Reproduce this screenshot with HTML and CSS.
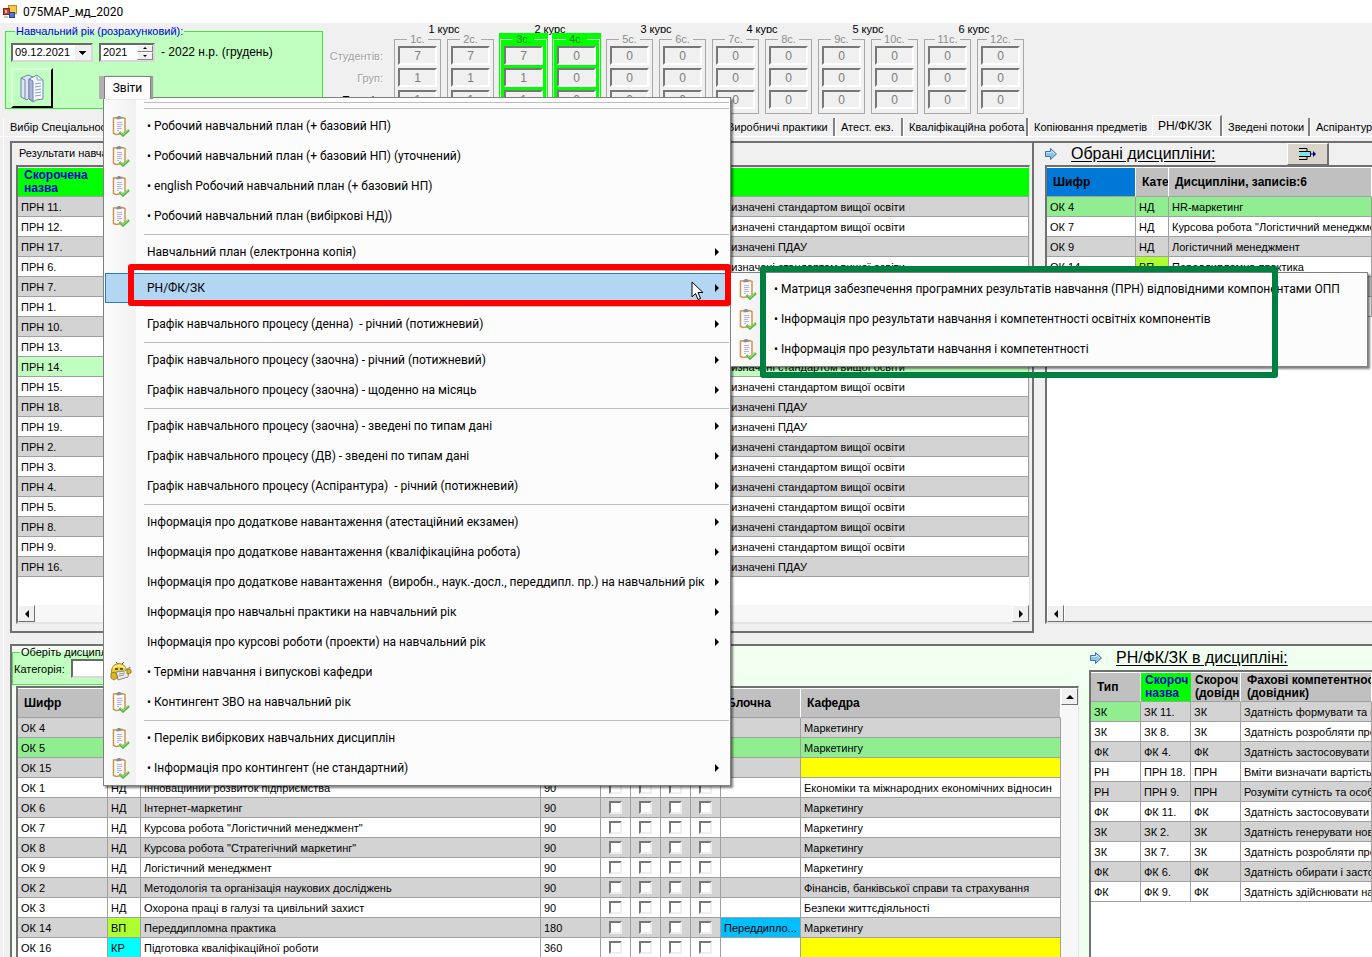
FILE: index.html
```html
<!DOCTYPE html>
<html lang="uk">
<head>
    <meta charset="UTF-8">
    <meta name="viewport" content="width=device-width, initial-scale=1.0">
    <title>075МАР_мд_2020</title>
    <link rel="stylesheet" href="styles.css">
</head>
<body>
    <svg class="sprite" aria-hidden="true">
        <symbol id="clip" viewBox="0 0 18 22">
            <path d="M1.500 3l9-.5 2.500 1v14.500l-9 1.500-2.500-1z" fill="#fff" stroke="#c9964c" stroke-width="1.500"/>
            <path d="M4 5.500l7.500-.5v11.500l-7.500 1z" fill="#f6f6fd"/>
            <path d="M4.500 2.500l1.500-1.500h2l1.500 1.500v1.500l-5 .5z" fill="#8c8c94"/>
            <path d="M5 7.500h5M5 9.500h5.500M5 11.500h4M5 13.500h5M5 15.500h2" stroke="#b3acd2" stroke-width=".9"/>
            <path d="M7.500 17l3.500 3.500 6-5.500" fill="none" stroke="#58b547" stroke-width="2.400"/>
            <path d="M8.500 17.500l2.500 2 5.500-5" fill="none" stroke="#a4e58a" stroke-width="1"/>
        </symbol>
        <symbol id="face" viewBox="0 0 22 22">
            <path d="M8 3l-2-2M12 3l2-2" stroke="#555" stroke-width="1"/>
            <circle cx="9" cy="10" r="7.500" fill="#f2cf2e" stroke="#a8871a"/>
            <path d="M3 7q6-5 12 0" fill="none" stroke="#fff3a0" stroke-width="1.500"/>
            <path d="M5 8h3M10 8h3" stroke="#333" stroke-width="1.500"/>
            <path d="M6 11l9-1 5-4-2 10-10 3z" fill="#e9e9e9" stroke="#8a8a8a"/>
            <path d="M9 13l6-1M9 15l5-1" stroke="#999"/>
            <path d="M1 12l4-1 3 5-4 3-3-2zM17 8l4 1v3l-4 1z" fill="#dfb424" stroke="#8d6f14" stroke-width=".8"/>
        </symbol>
        <symbol id="go" viewBox="0 0 12 12">
            <path d="M.5 3.500h5v-3L11.500 6l-6 5.500v-3h-5z" fill="#8cc4ea" stroke="#40749e"/>
            <path d="M1.500 4.500h5V3L10 6" fill="none" stroke="#d3ecfb"/>
        </symbol>
    </svg>

    <header class="titlebar">
        <svg class="app-icon" width="14" height="14" viewBox="0 0 14 14" aria-hidden="true">
            <rect x="5.500" y=".5" width="8" height="8" fill="#f6c748" stroke="#b98d1d"/>
            <rect x=".5" y="3.500" width="6" height="6" fill="#c8402e" stroke="#8b2a1c"/>
            <rect x="2" y="5" width="2" height="3" fill="#f3b8a8"/>
            <rect x="6.500" y="7.500" width="5" height="5" fill="#4a7bd0" stroke="#26478e"/>
            <path d="M1 12h4" stroke="#999"/>
        </svg>
        075МАР_мд_2020
    </header>

    <section class="top">
        <fieldset class="year">
            <legend>Навчальний рік (розрахунковий):</legend>
            <div class="year-row">
                <select class="date" aria-label="Дата"><option>09.12.2021</option></select>
                <span class="spin">
                    <input type="text" value="2021" aria-label="Рік">
                    <span class="spin-btns"><button class="up" aria-label="Більше"></button><button class="down" aria-label="Менше"></button></span>
                </span>
                <span>- 2022 н.р. (грудень)</span>
            </div>
            <button class="docs" aria-label="Документи">
                <svg width="26" height="30" viewBox="0 0 26 30">
                    <path d="M2 5l7-3 5 2v20l-4 1-2 2-6-3z" fill="#dfe5f5" stroke="#7182ab"/>
                    <path d="M2 5l4 2v19" fill="none" stroke="#7182ab"/>
                    <path d="M10 6l8-4 6 5v19l-7 1-3 2-4-3z" fill="#f7f9ff" stroke="#7182ab"/>
                    <path d="M10 6l4 2v20l-4-2z" fill="#a9b6d9" stroke="#7182ab"/>
                    <path d="M18 2v5h6M16 11l6-1M16 14l6-1M16 17l6-1M16 20l6-1M16 23l6-1" fill="none" stroke="#8d9cc4"/>
                </svg>
            </button>
        </fieldset>
        <div class="counts">
            <div class="count-labels">
                <span class="off">Студентів:</span>
                <span class="off">Груп:</span>
                <span>Потоків:</span>
            </div>
            <div class="courses" id="courses"></div>
        </div>
    </section>

    <nav class="tabs">
        <button class="tab tab-first">Вибір Спеціальностей</button>
        <button class="tab tab-114">Виробничі практики</button>
        <button class="tab tab-68">Атест. екз.</button>
        <button class="tab tab-126">Кваліфікаційна робота</button>
        <button class="tab tab-124">Копіювання предметів</button>
        <button class="tab tab-on">РН/ФК/ЗК</button>
        <button class="tab tab-88">Зведені потоки</button>
        <button class="tab">Аспірантура</button>
    </nav>

    <main class="page">
        <section class="upper">
            <div class="results">
                <div class="caption">Результати навчання</div>
                <div class="grid">
                    <table>
                        <colgroup><col class="w-90"><col><col class="w-308"></colgroup>
                        <thead><tr><th class="lime">Скорочена назва</th><th class="lime"></th><th class="lime"></th></tr></thead>
                        <tbody id="results"></tbody>
                    </table>
                    <div class="hscroll"><button class="left" aria-label="Ліворуч"></button><i></i><button class="right" aria-label="Праворуч"></button></div>
                </div>
            </div>
            <div class="chosen">
                <div class="heading">
                    <svg width="12" height="12"><use href="#go"/></svg>
                    <h2>Обрані дисципліни:</h2>
                    <button class="insert" aria-label="Додати">
                        <svg width="20" height="14" viewBox="0 0 20 14">
                            <path d="M1 1.500h8v3M1 12.500h8v-3" fill="none" stroke="#000"/>
                            <rect x="1.500" y="4.500" width="11" height="5" fill="#7fe9e9"/>
                            <path d="M1 4.500h11.500v5H1" fill="none" stroke="#000"/>
                            <path d="M12 7h5" stroke="#000080"/><path d="M15 4l3 3-3 3z" fill="#000080"/>
                        </svg>
                    </button>
                </div>
                <div class="grid">
                    <table>
                        <colgroup><col class="w-89"><col class="w-33"><col></colgroup>
                        <thead><tr><th class="blue">Шифр</th><th class="nowrap">Категорія</th><th class="nowrap">Дисципліни, записів:6</th></tr></thead>
                        <tbody>
                            <tr class="sel"><td>ОК 4</td><td>НД</td><td>HR-маркетинг</td></tr>
                            <tr><td>ОК 7</td><td>НД</td><td>Курсова робота "Логістичний менеджмент"</td></tr>
                            <tr class="odd"><td>ОК 9</td><td>НД</td><td>Логістичний менеджмент</td></tr>
                            <tr><td>ОК 14</td><td class="vp">ВП</td><td>Переддипломна практика</td></tr>
                            <tr class="odd"><td></td><td></td><td></td></tr>
                            <tr><td></td><td></td><td></td></tr>
                        </tbody>
                    </table>
                    <div class="hscroll"><button class="left" aria-label="Ліворуч"></button><i class="thumb"></i></div>
                </div>
            </div>
        </section>

        <section class="lower">
            <div class="subjects">
                <fieldset class="filter">
                    <legend>Оберіть дисципліну</legend>
                    <label for="cat">Категорія:</label>
                    <input type="text" id="cat">
                </fieldset>
                <div class="grid with-vscroll">
                    <table>
                        <colgroup><col class="w-90"><col class="w-33"><col><col class="w-60"><col class="w-30"><col class="w-30"><col class="w-30"><col class="w-30"><col class="w-80"><col class="w-260"></colgroup>
                        <thead><tr><th>Шифр</th><th></th><th></th><th></th><th></th><th></th><th></th><th></th><th class="nowrap">Блочна</th><th>Кафедра</th></tr></thead>
                        <tbody id="subjects"></tbody>
                    </table>
                    <div class="vscroll"><button class="up" aria-label="Вгору"></button></div>
                </div>
            </div>
            <div class="links">
                <div class="heading">
                    <svg width="12" height="12"><use href="#go"/></svg>
                    <h2>РН/ФК/ЗК в дисципліні:</h2>
                </div>
                <div class="grid">
                    <table>
                        <colgroup><col class="w-50"><col class="w-50"><col class="w-50"><col></colgroup>
                        <thead><tr><th>Тип</th><th class="lime tight">Скороч назва</th><th class="tight">Скороч (довідн</th><th class="nowrap">Фахові компетентності<br>(довідник)</th></tr></thead>
                        <tbody id="links"></tbody>
                    </table>
                </div>
            </div>
        </section>
    </main>

    <button class="menu-tab">Звіти</button>
    <div class="menu" id="menu"></div>
    <div class="menu submenu" id="submenu"></div>
    <div class="mark mark-red"></div>
    <div class="mark mark-green"></div>
    <svg class="cursor" width="13" height="20" viewBox="0 0 13 20" aria-hidden="true">
        <path d="M1 1v15l3.500-3.500 2.500 6 2.500-1-2.500-6h5z" fill="#fff" stroke="#000"/>
    </svg>

    <script>
        function byId(id) { return document.getElementById(id); }

        // semester counters, two per course
        var students = [7, 7, 7, 0, 0, 0, 0, 0, 0, 0, 0, 0];
        var groups = [1, 1, 1, 0, 0, 0, 0, 0, 0, 0, 0, 0];
        function semester(n) {
            var now = n == 3 || n == 4 ? ' now' : '';
            return '<div class="sem-wrap' + now + '"><fieldset class="sem" disabled><legend>' + n + 'с.</legend>' +
                [students[n - 1], groups[n - 1], groups[n - 1]].map(function (v) {
                    return '<input type="text" aria-label="' + n + ' семестр" value="' + v + '">';
                }).join('') + '</fieldset></div>';
        }
        byId('courses').innerHTML = [1, 2, 3, 4, 5, 6].map(function (c) {
            return '<div class="course"><div class="course-name">' + c + ' курс</div><div class="sems">' +
                semester(c * 2 - 1) + semester(c * 2) + '</div></div>';
        }).join('');

        // program results
        var own = [17, 18, 19, 16];
        byId('results').innerHTML = [11, 12, 17, 6, 7, 1, 10, 13, 14, 15, 18, 19, 2, 3, 4, 5, 8, 9, 16].map(function (n, i) {
            var cls = n == 14 ? 'pale' : i % 2 ? '' : 'odd';
            return '<tr class="' + cls + '"><td>ПРН ' + n + '.</td><td></td><td>Визначені ' +
                (own.indexOf(n) >= 0 ? 'ПДАУ' : 'стандартом вищої освіти') + '</td></tr>';
        }).join('');

        // subjects: code, category, name, hours, department
        var subjects = [
            ['ОК 4', 'НД', '', 90, 'Маркетингу'],
            ['ОК 5', 'НД', '', 90, 'Маркетингу'],
            ['ОК 15', 'НД', '', 90, ''],
            ['ОК 1', 'НД', 'Інноваційний розвиток підприємства', 90, 'Економіки та міжнародних економічних відносин'],
            ['ОК 6', 'НД', 'Інтернет-маркетинг', 90, 'Маркетингу'],
            ['ОК 7', 'НД', 'Курсова робота "Логістичний менеджмент"', 90, 'Маркетингу'],
            ['ОК 8', 'НД', 'Курсова робота "Стратегічний маркетинг"', 90, 'Маркетингу'],
            ['ОК 9', 'НД', 'Логістичний менеджмент', 90, 'Маркетингу'],
            ['ОК 2', 'НД', 'Методологія та організація наукових досліджень', 90, 'Фінансів, банківської справи та страхування'],
            ['ОК 3', 'НД', 'Охорона праці в галузі та цивільний захист', 90, 'Безпеки життєдіяльності'],
            ['ОК 14', 'ВП', 'Переддипломна практика', 180, 'Маркетингу'],
            ['ОК 16', 'КР', 'Підготовка кваліфікаційної роботи', 360, '']
        ];
        byId('subjects').innerHTML = subjects.map(function (s, i) {
            var row = i == 1 ? 'sel' : i % 2 ? '' : 'odd';
            var cat = s[1] == 'ВП' ? 'vp' : s[1] == 'КР' ? 'kr' : '';
            var box = '<td class="check"><input type="checkbox" aria-label="' + s[0] + '"></td>';
            return '<tr class="' + row + '"><td>' + s[0] + '</td><td class="' + cat + '">' + s[1] + '</td><td>' + s[2] +
                '</td><td>' + s[3] + '</td>' + box + box + box + box +
                (s[1] == 'ВП' ? '<td class="sky">Переддипло...</td>' : '<td></td>') +
                '<td class="' + (s[4] ? '' : 'empty') + '">' + s[4] + '</td></tr>';
        }).join('');

        var links = [
            ['ЗК', 'ЗК 11.', 'ЗК', 'Здатність формувати та підтримувати'],
            ['ЗК', 'ЗК 8.', 'ЗК', 'Здатність розробляти проекти'],
            ['ФК', 'ФК 4.', 'ФК', 'Здатність застосовувати методи'],
            ['РН', 'ПРН 18.', 'ПРН', 'Вміти визначати вартість товару'],
            ['РН', 'ПРН 9.', 'ПРН', 'Розуміти сутність та особливості'],
            ['ФК', 'ФК 11.', 'ФК', 'Здатність застосовувати методи'],
            ['ЗК', 'ЗК 2.', 'ЗК', 'Здатність генерувати нові ідеї'],
            ['ЗК', 'ЗК 7.', 'ЗК', 'Здатність розробляти проекти'],
            ['ФК', 'ФК 6.', 'ФК', 'Здатність обирати і застосовувати'],
            ['ФК', 'ФК 9.', 'ФК', 'Здатність здійснювати належний']
        ];
        byId('links').innerHTML = links.map(function (l, i) {
            return '<tr class="' + (i % 2 ? '' : 'odd') + '"><td class="' + (i ? '' : 'cur') + '">' + l.join('</td><td>') + '</td></tr>';
        }).join('');

        // menus: '-' separator, '*' clipboard icon, '@' face icon, '>' submenu, '!' open
        var items = ['-', '-',
            '*|• Робочий навчальний план (+ базовий НП)',
            '*|• Робочий навчальний план (+ базовий НП) (уточнений)',
            '*|• english Робочий навчальний план (+ базовий НП)',
            '*|• Робочий навчальний план (вибіркові НД))', '-',
            '>|Навчальний план (електронна копія)', '-',
            '>!|РН/ФК/ЗК', '-',
            '>|Графік навчального процесу (денна)  - річний (потижневий)', '-',
            '>|Графік навчального процесу (заочна) - річний (потижневий)',
            '>|Графік навчального процесу (заочна) - щоденно на місяць', '-',
            '>|Графік навчального процесу (заочна) - зведені по типам дані',
            '>|Графік навчального процесу (ДВ) - зведені по типам дані',
            '>|Графік навчального процесу (Аспірантура)  - річний (потижневий)', '-',
            '>|Інформація про додаткове навантаження (атестаційний екзамен)',
            '>|Інформація про додаткове навантаження (кваліфікаційна робота)',
            '>|Інформація про додаткове навантаження  (виробн., наук.-досл., переддипл. пр.) на навчальний рік',
            '>|Інформація про навчальні практики на навчальний рік',
            '>|Інформація про курсові роботи (проекти) на навчальний рік',
            '@|• Терміни навчання і випускові кафедри',
            '*|• Контингент ЗВО на навчальний рік', '-',
            '*|• Перелік вибіркових навчальних дисциплін',
            '*>|• Інформація про контингент (не стандартний)'];
        var subitems = [
            '*|• Матриця забезпечення програмних результатів навчання (ПРН) відповідними компонентами ОПП',
            '*|• Інформація про результати навчання і компетентності освітніх компонентів',
            '*|• Інформація про результати навчання і компетентності'];
        function menuItem(text) {
            if (text == '-') return '<hr>';
            var p = text.split('|'), f = p[0];
            var icon = f[0] == '*' ? '<svg width="18" height="22"><use href="#clip"/></svg>'
                : f[0] == '@' ? '<svg width="22" height="22"><use href="#face"/></svg>' : '';
            return '<button class="item' + (f.indexOf('!') > 0 ? ' item-on' : '') + '"><span class="pic">' + icon +
                '</span><span class="label">' + p[1] + '</span>' + (f.indexOf('>') >= 0 ? '<span class="more"></span>' : '') + '</button>';
        }
        byId('menu').innerHTML = items.map(menuItem).join('');
        byId('submenu').innerHTML = subitems.map(menuItem).join('');
    </script>
</body>
</html>
```
FILE: styles.css
```css
* {
    box-sizing: border-box;
}
body {
    margin: 0;
    height: 100vh;
    overflow: hidden;
    display: flex;
    flex-direction: column;
    position: relative;
    background: #f0f0f0;
    color: #000;
    font-family: "Liberation Sans", Arial, sans-serif;
    font-size: 11px;
}
button, input, select {
    font: inherit;
    color: inherit;
    margin: 0;
    padding: 0;
}
.sprite {
    position: absolute;
    width: 0;
    height: 0;
}
.titlebar {
    flex: none;
    display: flex;
    align-items: center;
    gap: 6px;
    height: 23px;
    padding-left: 3px;
    background: #fff;
    font-family: Roboto, sans-serif;
    font-size: 12px;
}

/* year box and counters */
.top {
    flex: none;
    display: flex;
    height: 92px;
}
.year {
    width: 318px;
    height: 86px;
    margin: 0 0 0 5px;
    padding: 3px 5px 0;
    border: 1px solid #3ce63c;
    background: #c0ffc0;
    font-size: 12px;
}
.year legend {
    margin-left: 4px;
    padding: 0 1px;
    color: #0000e0;
    font-size: 11px;
    line-height: 16px;
}
.year-row {
    display: flex;
    align-items: center;
    gap: 6px;
    height: 20px;
}
.date {
    appearance: none;
    width: 82px;
    height: 19px;
    padding-left: 2px;
    border: 2px solid;
    border-color: #696969 #d8d8d8 #d8d8d8 #696969;
    border-radius: 0;
    background: linear-gradient(#000, #000) 66px 6px / 7px 1px no-repeat,
        linear-gradient(#000, #000) 67px 7px / 5px 1px no-repeat,
        linear-gradient(#000, #000) 68px 8px / 3px 1px no-repeat,
        linear-gradient(#000, #000) 69px 9px / 1px 1px no-repeat,
        linear-gradient(90deg, #fff 62px, #f0f0f0 62px);
    font-size: 11px;
}
.spin {
    display: flex;
    width: 56px;
    height: 19px;
    border: 2px solid;
    border-color: #696969 #d8d8d8 #d8d8d8 #696969;
    background: #fff;
    font-size: 11px;
}
.spin input {
    flex: 1;
    min-width: 0;
    border: 0;
    padding-left: 2px;
}
.spin-btns {
    display: flex;
    flex-direction: column;
    width: 16px;
}
.spin-btns button {
    flex: 1;
    min-height: 0;
    display: flex;
    align-items: center;
    justify-content: center;
    border: 1px solid;
    border-color: #fff #888 #888 #fff;
    background: #f0f0f0;
}
.up::before, .down::before, .left::before, .right::before {
    content: "";
    border: 0 solid transparent;
}
.up::before {
    border-width: 0 4px 4px;
    border-bottom-color: #000;
}
.down::before {
    border-width: 4px 4px 0;
    border-top-color: #000;
}
.spin-btns .up::before {
    border-width: 0 2px 2px;
}
.spin-btns .down::before {
    border-width: 2px 2px 0;
}
.docs {
    display: flex;
    align-items: center;
    justify-content: center;
    width: 42px;
    height: 40px;
    margin-top: 6px;
    border: 2px solid;
    border-color: #dfffdf #000 #000 #dfffdf;
    background: #c0ffc0;
}
.counts {
    display: flex;
    gap: 10px;
}
.count-labels {
    width: 60px;
    padding-top: 22px;
    text-align: right;
}
.count-labels span {
    display: block;
    line-height: 22px;
}
.count-labels .off {
    color: #a0a0a0;
    text-shadow: 1px 1px #fff;
}
.courses, .sems {
    display: flex;
    gap: 4px;
}
.course-name {
    height: 10px;
    line-height: 12px;
    text-align: center;
}
.sem-wrap {
    position: relative;
    width: 49px;
    height: 82px;
    padding: 0 1px;
    background: #f0f0f0;
}
.sem-wrap.now {
    background: #00ff00;
}
.sem {
    display: flex;
    flex-direction: column;
    gap: 3px;
    height: 81px;
    min-width: 0;
    margin: 0;
    padding: 1px 3px;
    border: 1px solid #a8a8a8;
}
.now .sem {
    border-color: #d8ffd8;
}
.sem legend {
    margin: 0 auto;
    padding: 0 3px;
    color: #8c8c8c;
    line-height: 12px;
}
.now legend {
    color: #3a7a3a;
}
.sem input {
    width: 39px;
    height: 19px;
    border: 2px solid;
    border-color: #777 #fff #fff #777;
    background: #f0f0f0;
    color: #7c7c7c;
    font-size: 12px;
    text-align: center;
}

/* tabs */
.tabs {
    flex: none;
    display: flex;
    align-items: flex-end;
    height: 22px;
    padding-left: 3px;
    border-bottom: 1px solid #fff;
}
.tab {
    flex: none;
    height: 18px;
    padding: 0 5px;
    border: 0;
    border-right: 2px solid #808080;
    border-left: 1px solid #fff;
    background: #f0f0f0;
    text-align: left;
    white-space: nowrap;
}
.tab-first {
    width: 718px;
    padding-left: 6px;
}
.tab-114 {
    width: 114px;
}
.tab-68 {
    width: 68px;
}
.tab-126 {
    width: 125px;
}
.tab-124 {
    width: 124px;
    border-right: 0;
}
.tab-88 {
    width: 88px;
}
.tab-on {
    width: 70px;
    height: 21px;
    border-top: 1px solid #fff;
    font-size: 12px;
}

/* page */
.page {
    flex: 1;
    min-height: 0;
    display: flex;
    flex-direction: column;
    margin-left: 3px;
    padding: 4px 0 0 6px;
    border-left: 1px solid #fff;
}
.upper {
    flex: none;
    display: flex;
    gap: 10px;
    height: 492px;
    border-top: 2px solid #707070;
}
.results {
    flex: 1;
    min-width: 0;
    display: flex;
    flex-direction: column;
    padding: 0 2px 7px 4px;
    border: 2px solid #707070;
    border-top: 0;
}
.caption {
    height: 22px;
    padding-left: 3px;
    line-height: 20px;
}
.chosen {
    flex: none;
    width: 328px;
    display: flex;
    flex-direction: column;
    padding-bottom: 9px;
}
.heading {
    flex: none;
    display: flex;
    align-items: center;
    gap: 14px;
    height: 22px;
    padding-left: 1px;
}
.heading h2 {
    margin: 0;
    font-size: 16px;
    font-weight: normal;
    line-height: 20px;
    text-decoration: underline;
    text-underline-offset: 2px;
}
.insert {
    display: flex;
    align-items: center;
    justify-content: center;
    width: 42px;
    height: 22px;
    margin-left: 58px;
    border: 1px solid;
    border-color: #fff #707070 #707070 #fff;
    border-right-width: 2px;
    background: #d9d5cc;
}
.grid {
    flex: 1;
    min-height: 0;
    min-width: 0;
    display: flex;
    flex-direction: column;
    overflow: hidden;
    border: 2px solid;
    border-color: #707070 #e3e3e3 #e3e3e3 #707070;
    background: #fff;
}
.results .grid {
    border-right-width: 1px;
}
.chosen .grid {
    margin-left: 1px;
    border-right: 0;
}
table {
    width: 100%;
    table-layout: fixed;
    border-collapse: separate;
    border-spacing: 0;
}
th {
    height: 30px;
    padding: 0 0 0 6px;
    border-right: 1px solid #fff;
    border-bottom: 1px solid #a0a0a0;
    border-top: 1px solid #fff;
    background: #c0c0c0;
    font-size: 12px;
    line-height: 13px;
    text-align: left;
    overflow: hidden;
}
.lime {
    background: #00ff00;
    border-right-color: #00ff00;
    color: #0000d0;
}
.blue {
    background: #0078d7;
}
.nowrap {
    white-space: nowrap;
}
.tight {
    padding: 0 0 0 4px;
}
td {
    height: 20px;
    padding: 0 3px;
    border-right: 1px solid #a0a0a0;
    border-bottom: 1px solid #a0a0a0;
    overflow: hidden;
    white-space: nowrap;
}
.odd {
    background: #d3d3d3;
}
.sel, .cur {
    background: #90ee90;
}
.pale {
    background: #c0ffc0;
}
.vp {
    background: #adff2f;
}
.kr {
    background: #00ffff;
}
.sky {
    background: #00bfff;
}
.empty {
    background: #ffff00;
}
.check {
    padding: 0;
    text-align: center;
}
.check input {
    appearance: none;
    display: block;
    width: 13px;
    height: 13px;
    margin: 0 auto;
    border: 2px solid;
    border-color: #777 #eee #eee #777;
    background: #fff;
}
.w-30 { width: 30px; }
.w-33 { width: 33px; }
.w-50 { width: 50px; }
.w-60 { width: 60px; }
.w-80 { width: 80px; }
.w-89 { width: 89px; }
.w-90 { width: 90px; }
.w-260 { width: 260px; }
.w-308 { width: 308px; }
.hscroll {
    flex: none;
    display: flex;
    height: 17px;
    margin-top: auto;
    background: #f7f7f7;
}
.hscroll i {
    flex: 1;
}
.hscroll .thumb {
    border: 1px solid;
    border-color: #fff #707070 #707070 #fff;
    border-right: 0;
    background: #f0f0f0;
}
.hscroll button, .vscroll button {
    display: flex;
    align-items: center;
    justify-content: center;
    width: 17px;
    height: 17px;
    border: 1px solid;
    border-color: #fff #707070 #707070 #fff;
    background: #f0f0f0;
}
.left::before {
    border-width: 4px 4px 4px 0;
    border-right-color: #000;
}
.right::before {
    border-width: 4px 0 4px 4px;
    border-left-color: #000;
}

/* lower half */
.lower {
    flex: 1;
    min-height: 0;
    display: flex;
    gap: 10px;
    margin-top: 11px;
    border-top: 2px solid #707070;
    border-left: 2px solid #707070;
    background: #f0fff0;
}
.subjects {
    flex: 1;
    min-width: 0;
    display: flex;
    flex-direction: column;
}
.filter {
    width: 320px;
    height: 39px;
    margin: 0;
    padding: 0 1px;
    border: 1px solid #52e052;
    background: #c0ffc0;
}
.filter legend {
    margin-left: 6px;
    padding: 0 1px;
    line-height: 13px;
}
.filter input {
    width: 120px;
    height: 19px;
    margin-left: 3px;
    border: 2px solid;
    border-color: #696969 #d8d8d8 #d8d8d8 #696969;
}
.lower .grid {
    border-bottom: 0;
}
.subjects .grid {
    margin: 1px 0 0 4px;
    border-right-width: 1px;
}
.with-vscroll {
    flex-direction: row;
}
.with-vscroll table {
    flex: 1;
    align-self: flex-start;
}
.vscroll {
    flex: none;
    width: 17px;
    background: #f7f7f7;
}
.links {
    flex: none;
    width: 283px;
    display: flex;
    flex-direction: column;
}
.links .grid {
    border-right: 0;
}
.links .heading {
    height: 24px;
}

/* reports menu */
.menu-tab {
    position: absolute;
    left: 104px;
    top: 76px;
    width: 47px;
    height: 23px;
    border: 1px solid #808080;
    border-bottom: 0;
    background: #fcfcfc;
    box-shadow: -5px 0 0 #b0b0b0, 2px 0 1px #a0a0a0;
    font-family: Roboto, sans-serif;
    font-size: 12px;
    z-index: 3;
}
.menu {
    position: absolute;
    left: 103px;
    top: 97px;
    width: 628px;
    padding: 1px 1px 2px;
    border: 1px solid #808080;
    background: linear-gradient(90deg, #fcfcfc, #f1f1f1 32px, #fcfcfc 32px);
    box-shadow: 2px 2px 2px rgba(0, 0, 0, 0.5);
    font-family: Roboto, sans-serif;
    font-size: 12px;
    z-index: 2;
}
.menu hr {
    height: 6px;
    margin: 0 0 0 39px;
    border: 0;
    background: linear-gradient(#bdbdbd, #bdbdbd) 0 3px / 100% 1px no-repeat;
}
.item {
    display: flex;
    align-items: center;
    width: 100%;
    height: 30px;
    border: 1px solid transparent;
    background: none;
    text-align: left;
    white-space: pre;
}
.item-on {
    border-color: #2a7ac0;
    background: #b3d7f3;
}
.pic {
    flex: none;
    display: flex;
    justify-content: center;
    width: 30px;
    margin-right: 11px;
}
.label {
    flex: 1;
}
.more {
    margin-right: 9px;
    border: 4px solid transparent;
    border-left-color: #000;
    border-right: 0;
}
.submenu {
    left: 730px;
    top: 272px;
    width: 638px;
}

/* highlight frames */
.mark {
    position: absolute;
    border: 6px solid #ff0000;
    border-radius: 3px;
    z-index: 4;
}
.mark-red {
    left: 128px;
    top: 264px;
    width: 603px;
    height: 42px;
}
.mark-green {
    left: 760px;
    top: 266px;
    width: 518px;
    height: 112px;
    border-color: #008040;
}
.cursor {
    position: absolute;
    left: 691px;
    top: 281px;
    z-index: 5;
}
```
